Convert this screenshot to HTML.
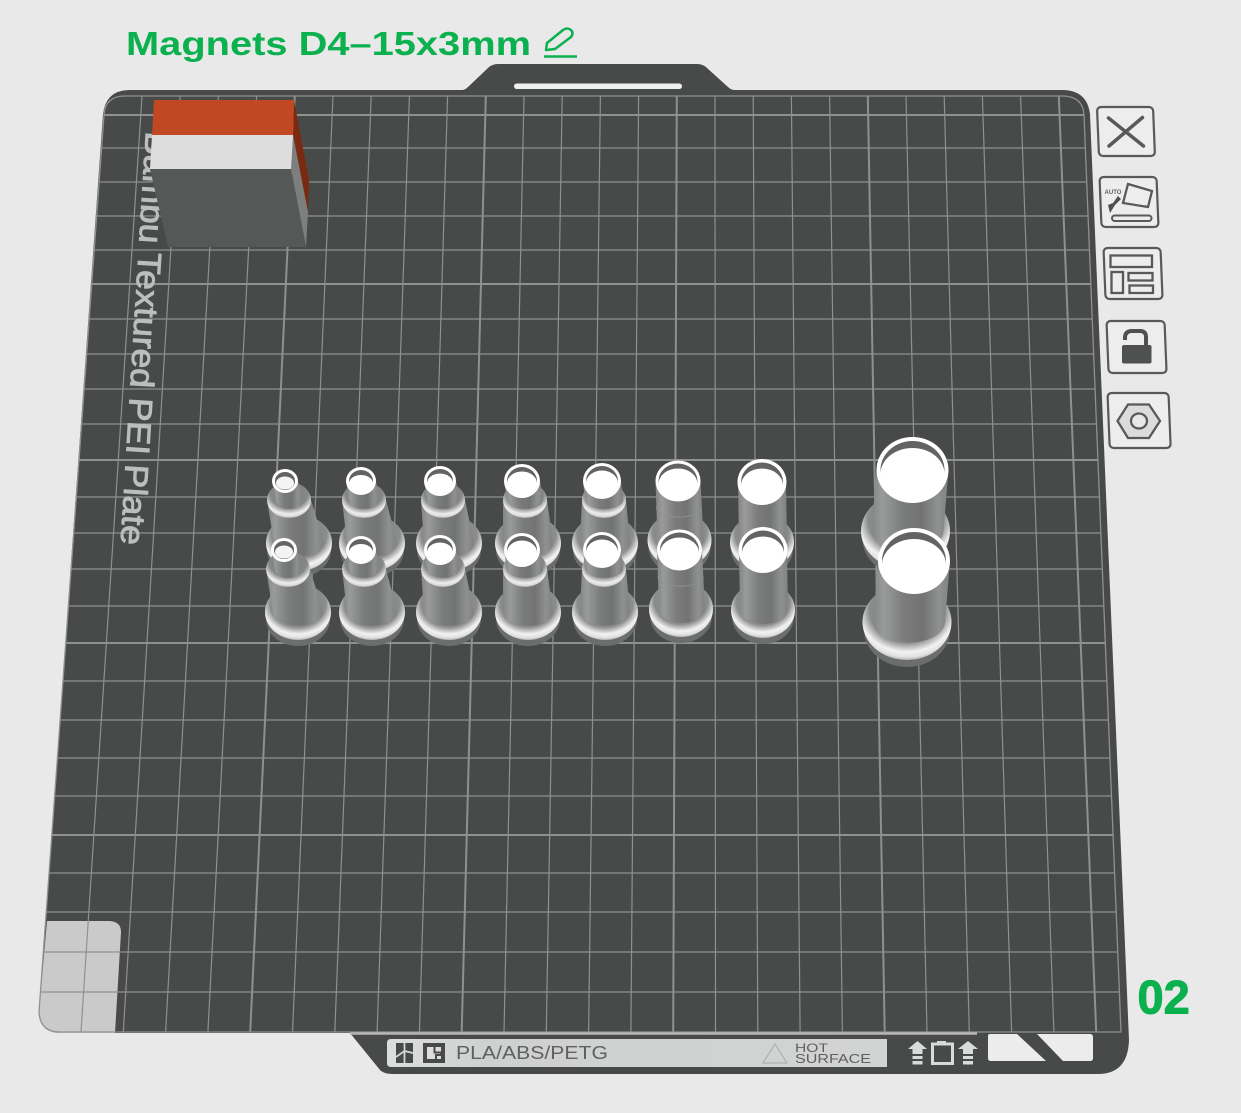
<!DOCTYPE html>
<html><head><meta charset="utf-8"><style>
html,body{margin:0;padding:0;background:#e9e9e9;width:1241px;height:1113px;overflow:hidden}
svg{display:block}
text{font-family:"Liberation Sans",sans-serif}
</style></head><body>
<svg width="1241" height="1113" viewBox="0 0 1241 1113" xmlns="http://www.w3.org/2000/svg">
<defs>
<linearGradient id="b" x1="0" x2="1" y1="0" y2="0"><stop offset="0" stop-color="#848585"/><stop offset=".14" stop-color="#9a9b9b"/><stop offset=".4" stop-color="#7b7c7c"/><stop offset=".65" stop-color="#727373"/><stop offset=".86" stop-color="#909191"/><stop offset="1" stop-color="#808181"/></linearGradient>
<radialGradient id="f" cx=".5" cy=".35" r=".68"><stop offset="0" stop-color="#808181"/><stop offset=".62" stop-color="#8b8c8c"/><stop offset=".8" stop-color="#f2f2f2"/><stop offset=".9" stop-color="#e0e0e0"/><stop offset="1" stop-color="#8e8f8f"/></radialGradient>
<radialGradient id="s" cx=".5" cy=".3" r=".72"><stop offset="0" stop-color="#7b7c7c"/><stop offset=".6" stop-color="#868787"/><stop offset=".82" stop-color="#eeeeee"/><stop offset=".92" stop-color="#d8d8d8"/><stop offset="1" stop-color="#8e8f8f"/></radialGradient>
<linearGradient id="bar" x1="0" x2="1" y1="0" y2="0"><stop offset="0" stop-color="#dcdddd"/><stop offset=".2" stop-color="#cfd0d0"/><stop offset="1" stop-color="#d2d3d3"/></linearGradient>
<clipPath id="g"><path d="M125 96H1062Q1083 96 1084 115L1121 1032H60Q40 1032 39 1012L104 115Q105 96 125 96Z"/></clipPath>

<g id="p1">
<ellipse cx="298" cy="619" rx="32" ry="27" fill="#6c6d6d"/><ellipse cx="298" cy="612" rx="33" ry="28" fill="url(#f)"/>
<path d="M266 569L273 612A25 14 0 0 0 323 612L310 569Z" fill="url(#b)"/><ellipse cx="288" cy="569" rx="22" ry="18" fill="url(#s)"/>
<path d="M271 550L275 569A13 9 0 0 0 301 569L297 550Z" fill="url(#b)"/>
<ellipse cx="284" cy="550" rx="13" ry="12" fill="#fff"/><ellipse cx="284" cy="550" rx="10" ry="9" fill="#626363"/><ellipse cx="284" cy="552" rx="9" ry="6.5" fill="#f4f4f4"/>
</g>
<g id="p2">
<ellipse cx="372" cy="619" rx="32" ry="27" fill="#6c6d6d"/><ellipse cx="372" cy="612" rx="33" ry="28" fill="url(#f)"/>
<path d="M342 569L347 612A25 14 0 0 0 397 612L386 569Z" fill="url(#b)"/><ellipse cx="364" cy="569" rx="22" ry="18" fill="url(#s)"/>
<path d="M346 550L349 569A15 9 0 0 0 379 569L376 550Z" fill="url(#b)"/>
<ellipse cx="361" cy="550" rx="15" ry="14" fill="#fff"/><ellipse cx="361" cy="550" rx="12" ry="11" fill="#626363"/><ellipse cx="361" cy="552.5" rx="12" ry="8.5" fill="#fff"/>
</g>
<g id="p3">
<ellipse cx="449" cy="619" rx="32" ry="27" fill="#6c6d6d"/><ellipse cx="449" cy="612" rx="33" ry="28" fill="url(#f)"/>
<path d="M421 569L424 612A25 14 0 0 0 474 612L465 569Z" fill="url(#b)"/><ellipse cx="443" cy="569" rx="22" ry="18" fill="url(#s)"/>
<path d="M424 550L427 569A16 9 0 0 0 459 569L456 550Z" fill="url(#b)"/>
<ellipse cx="440" cy="550" rx="16" ry="15" fill="#fff"/><ellipse cx="440" cy="550" rx="13" ry="12" fill="#626363"/><ellipse cx="440" cy="552.5" rx="13" ry="10" fill="#fff"/>
</g>
<g id="p4">
<ellipse cx="528" cy="619" rx="32" ry="27" fill="#6c6d6d"/><ellipse cx="528" cy="612" rx="33" ry="28" fill="url(#f)"/>
<path d="M503 569L503 612A25 14 0 0 0 553 612L547 569Z" fill="url(#b)"/><ellipse cx="525" cy="569" rx="22" ry="18" fill="url(#s)"/>
<path d="M504 550L507 569A18 9 0 0 0 543 569L540 550Z" fill="url(#b)"/>
<ellipse cx="522" cy="550" rx="18" ry="17" fill="#fff"/><ellipse cx="522" cy="550" rx="15" ry="14" fill="#626363"/><ellipse cx="522" cy="552.5" rx="15" ry="12" fill="#fff"/>
</g>
<g id="p5">
<ellipse cx="605" cy="619" rx="32" ry="27" fill="#6c6d6d"/><ellipse cx="605" cy="612" rx="33" ry="28" fill="url(#f)"/>
<path d="M582 569L580 612A25 14 0 0 0 630 612L626 569Z" fill="url(#b)"/><ellipse cx="604" cy="569" rx="22" ry="18" fill="url(#s)"/>
<path d="M583 550L585 569A19 9 0 0 0 623 569L621 550Z" fill="url(#b)"/>
<ellipse cx="602" cy="550" rx="19" ry="18" fill="#fff"/><ellipse cx="602" cy="550" rx="16" ry="15" fill="#626363"/><ellipse cx="602" cy="552.5" rx="16" ry="13" fill="#fff"/>
</g>
<g id="p6">
<ellipse cx="681" cy="616" rx="31" ry="27" fill="#6c6d6d"/><ellipse cx="681" cy="609" rx="32" ry="28" fill="url(#f)"/>
<path d="M657 550L659 609A23 14 0 0 0 705 609L702 550Z" fill="url(#b)"/>
<path d="M658 576A22 10 0 0 0 703 576" fill="none" stroke="#8f9090" stroke-width="1"/>
<ellipse cx="679.500" cy="550" rx="22.500" ry="20.500" fill="#fff"/><ellipse cx="679.500" cy="550" rx="19.500" ry="17.500" fill="#626363"/><ellipse cx="679.500" cy="553" rx="19.500" ry="15.500" fill="#fff"/>
</g>
<g id="p7">
<ellipse cx="763" cy="617" rx="31" ry="27" fill="#6c6d6d"/><ellipse cx="763" cy="610" rx="32" ry="28" fill="url(#f)"/>
<path d="M739 550L740 610A24 14 0 0 0 788 610L787 550Z" fill="url(#b)"/>
<ellipse cx="763" cy="550" rx="24.500" ry="23" fill="#fff"/><ellipse cx="763" cy="550" rx="21" ry="19.500" fill="#626363"/><ellipse cx="763" cy="553.500" rx="21" ry="17" fill="#fff"/>
</g>
<g id="p8">
<ellipse cx="907" cy="630" rx="43" ry="37" fill="#6c6d6d"/><ellipse cx="907" cy="622" rx="44.500" ry="38" fill="url(#f)"/>
<path d="M878 561L873 622A35 20 0 0 0 945 622L950 561Z" fill="url(#b)"/>
<ellipse cx="914" cy="561" rx="36" ry="33" fill="#fff"/><ellipse cx="914" cy="561" rx="32" ry="29" fill="#626363"/><ellipse cx="914" cy="565" rx="32" ry="26" fill="#fff"/>
</g>
</defs>

<rect width="1241" height="1113" fill="#e9e9e9"/>

<!-- title -->
<text x="126" y="55" font-size="33" font-weight="700" fill="#0bb04f" textLength="405" lengthAdjust="spacingAndGlyphs">Magnets D4–15x3mm</text>
<path d="M544 56.500H577" stroke="#0bb04f" stroke-width="2.500" fill="none"/>
<path d="M546 50L547 43L563 30Q567 27 571 30Q574 33 571 37L555 49Z" stroke="#0bb04f" stroke-width="2.500" fill="none" stroke-linejoin="round"/>

<!-- plate -->
<path d="M130 90H462Q465 90 468 87L488 68Q492 64 498 64H697Q703 64 707 68L728 87Q731 90 735 90H1062Q1087 90 1090 114L1129 1040Q1128 1074 1098 1074H392Q384 1074 380 1070L350 1033H60Q40 1033 39 1012L103 114Q106 90 130 90Z" fill="#484a49"/>
<rect x="514" y="83.500" width="168" height="5.500" rx="2.700" fill="#f0f0f0"/>

<!-- bottom-left patch -->
<path d="M47 921H108Q121 921 121 932L115 1033H60Q40 1033 39 1012Z" fill="#cacaca"/>

<!-- grid -->
<g clip-path="url(#g)" stroke="#8f9190" fill="none">
<g stroke-width="1.200">
<path d="M0 148H1241M0 182H1241M0 216H1241M0 250H1241M0 319H1241M0 354H1241M0 389H1241M0 424H1241M0 497H1241M0 533H1241M0 569H1241M0 606H1241M0 681H1241M0 720H1241M0 758H1241M0 796H1241M0 873H1241M0 912H1241M0 952H1241M0 992H1241"/>
<path d="M142 96L81 1032M180.200 96L123.300 1032M218.400 96L165.600 1032M256.600 96L207.900 1032M333 96L292.500 1032M371.200 96L334.800 1032M409.400 96L377.100 1032M447.600 96L419.400 1032M524 96L504 1032M562.200 96L546.300 1032M600.400 96L588.600 1032M638.600 96L630.900 1032M715 96L715.500 1032M753.200 96L757.800 1032M791.400 96L800.100 1032M829.600 96L842.400 1032M906 96L927 1032M944.200 96L969.300 1032M982.400 96L1011.600 1032M1020.600 96L1053.900 1032"/>
</g>
<g stroke-width="2">
<path d="M0 115H1241M0 284H1241M0 460H1241M0 643H1241M0 835H1241"/>
<path d="M294.800 96L250.200 1032M485.800 96L461.700 1032M676.800 96L673.200 1032M867.800 96L884.700 1032M1058.800 96L1096.200 1032"/>
</g>
</g>
<path d="M125 96H1062Q1083 96 1084 115L1121 1032H60Q40 1032 39 1012L104 115Q105 96 125 96Z" fill="none" stroke="#8f9190" stroke-width="1.300"/>

<!-- plate label -->
<text transform="translate(146 131) rotate(93.500)" font-size="33" fill="#bcbdbd" stroke="#bcbdbd" stroke-width=".9" textLength="414" lengthAdjust="spacingAndGlyphs">Bambu Textured PEI Plate</text>

<!-- cube -->
<polygon points="294,100 309,180 308,212 293,135" fill="#7a2a10"/>
<polygon points="293,135 308,212 306,247 291,169" fill="#7d7f7f"/>
<polygon points="150,169 291,169 306,247 168,247" fill="#565757"/>
<polygon points="154,100 294,100 293,135 152,135" fill="#c14823"/>
<polygon points="152,135 293,135 291,169 150,169" fill="#dddddd"/>

<!-- posts -->
<use href="#p1" transform="translate(1 -69)"/><use href="#p2" transform="translate(0 -69)"/><use href="#p3" transform="translate(0 -69)"/><use href="#p4" transform="translate(0 -69)"/><use href="#p5" transform="translate(0 -69)"/><use href="#p6" transform="translate(-1.500 -69)"/><use href="#p7" transform="translate(-1 -68)"/><use href="#p8" transform="translate(-1.500 -91)"/>
<use href="#p1"/><use href="#p2"/><use href="#p3"/><use href="#p4"/><use href="#p5"/><use href="#p6"/><use href="#p7"/><use href="#p8"/>

<!-- side buttons -->
<g fill="#ededed" stroke="#58595a" stroke-width="2.200">
<rect width="56" height="49" rx="4" transform="translate(1097 107) skewX(2.300)"/>
<rect width="57" height="50" rx="4" transform="translate(1099.500 177) skewX(2.300)"/>
<rect width="57" height="51" rx="4" transform="translate(1103.500 248) skewX(2.300)"/>
<rect width="58" height="52" rx="4" transform="translate(1106.500 321) skewX(2.300)"/>
<rect width="61" height="55" rx="4" transform="translate(1107.500 393) skewX(2.300)"/>
</g>
<path d="M1108.500 118L1143.500 146M1142.500 117.500L1109 146" stroke="#58595a" stroke-width="3.500" fill="none" stroke-linecap="round"/>
<!-- auto -->
<polygon points="1128,184 1152,191 1148,207 1123,203" fill="none" stroke="#58595a" stroke-width="2.300"/>
<rect x="1112" y="215.500" width="39.500" height="5.500" rx="2.700" fill="none" stroke="#58595a" stroke-width="2"/>
<text x="1104.500" y="194" font-size="6.500" font-weight="700" fill="#636464" textLength="17" lengthAdjust="spacingAndGlyphs">AUTO</text>
<polygon points="1118,196 1121,199 1115,205 1110,213 1108,205 1113,203" fill="#4e4f4f"/>
<!-- layout -->
<g fill="none" stroke="#58595a" stroke-width="2.300">
<rect x="1110.500" y="255.500" width="41.500" height="11.500"/>
<rect x="1111.500" y="272" width="11.500" height="21"/>
<rect x="1128.500" y="273" width="24" height="7.500"/>
<rect x="1129.500" y="285.500" width="23.500" height="7.500"/>
</g>
<!-- lock -->
<rect x="1122" y="345" width="29.500" height="18.500" rx="2" fill="#4f5050"/>
<path d="M1125 340V337Q1125.500 331 1132 331H1140Q1146 331 1146 337V346" fill="none" stroke="#4f5050" stroke-width="4"/>
<!-- nut -->
<polygon points="1117.500,421 1128,404.500 1149,404.500 1160,421 1149,438 1128,438" fill="#dcdcdc" stroke="#58595a" stroke-width="2.300"/>
<ellipse cx="1139" cy="421" rx="8" ry="7.500" fill="#e8e8e8" stroke="#58595a" stroke-width="2.300"/>

<!-- 02 -->
<text x="1137.500" y="1013.500" font-size="47" font-weight="700" fill="#0bb04f" stroke="#0bb04f" stroke-width="1">02</text>

<!-- bottom bar -->
<path d="M350 1033.500H977" stroke="#b5b6b6" stroke-width="2.500"/>
<path d="M391 1039H887V1067H391Q387 1067 387 1063V1043Q387 1039 391 1039Z" fill="url(#bar)"/>
<rect x="396" y="1043" width="17" height="20" fill="#484a49"/>
<path d="M404.500 1043V1063M396 1057L404.500 1051L413 1053" stroke="#d4d5d5" stroke-width="1.800" fill="none"/>
<rect x="423" y="1043" width="22" height="20" fill="#484a49"/>
<path d="M427 1047H441V1059H427Z" fill="#dcdcdc"/>
<path d="M434.500 1047V1052.500H441V1055H436V1059" fill="none" stroke="#484a49" stroke-width="2"/>
<text x="456" y="1059" font-size="18" fill="#5f6060" textLength="152" lengthAdjust="spacingAndGlyphs">PLA/ABS/PETG</text>
<path d="M775 1044L763 1063H787Z" fill="none" stroke="#a9aaaa" stroke-width="1"/>
<text x="795" y="1052" font-size="12" fill="#5f6060" textLength="33" lengthAdjust="spacingAndGlyphs">HOT</text>
<text x="795" y="1063" font-size="13" fill="#5f6060" textLength="76" lengthAdjust="spacingAndGlyphs">SURFACE</text>
<!-- arrows -->
<g fill="#d9dada">
<path d="M917.500 1041L927 1049H922.500V1054H912.500V1049H908Z"/><rect x="912.500" y="1056" width="10" height="3"/><rect x="912.500" y="1061" width="10" height="3.500"/>
<path d="M968 1041L978 1049H973V1054H963V1049H958Z"/><rect x="963" y="1056" width="10" height="3"/><rect x="963" y="1061" width="10" height="3.500"/>
<rect x="937" y="1041" width="9" height="3"/>
</g>
<rect x="932.500" y="1044" width="20" height="19.500" fill="none" stroke="#d9dada" stroke-width="3"/>
<!-- cutouts -->
<path d="M990 1034H1017L1046 1061H991Q988 1061 988 1058V1036Q988 1034 990 1034Z" fill="#ececec"/>
<path d="M1037 1034H1090Q1093 1034 1093 1037V1058Q1093 1061 1090 1061H1063Z" fill="#ececec"/>
</svg>
</body></html>
